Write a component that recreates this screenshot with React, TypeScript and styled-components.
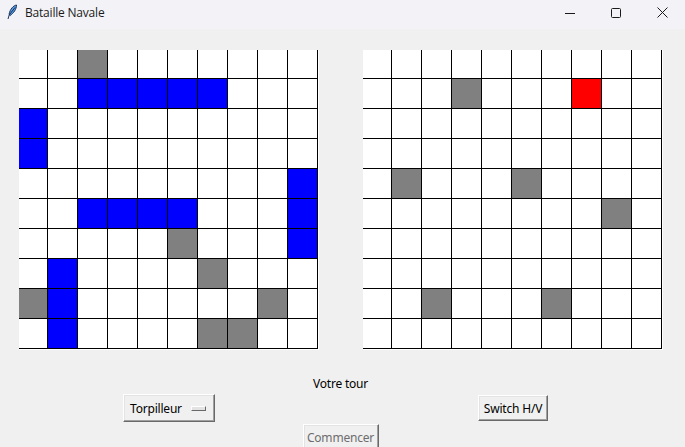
import React from "react";
import styled, { createGlobalStyle } from "styled-components";

type CellState = "empty" | "ship" | "miss" | "hit";

const GlobalStyle = createGlobalStyle`
  html, body {
    margin: 0;
    padding: 0;
    background: #f0f0f0;
  }
  body {
    font-family: "Noto Sans", "DejaVu Sans", sans-serif;
    font-size: 12px;
    color: #000;
  }
`;

const cellColors: Record<CellState, string> = {
  empty: "#ffffff",
  ship: "#0000ff",
  miss: "#808080",
  hit: "#ff0000",
};

// player board: ships placed + enemy shots that missed
const playerShips: [number, number][] = [
  [1, 2], [1, 3], [1, 4], [1, 5], [1, 6],
  [2, 0], [3, 0],
  [4, 9], [5, 9], [6, 9],
  [5, 2], [5, 3], [5, 4], [5, 5],
  [7, 1], [8, 1], [9, 1],
];
const playerMisses: [number, number][] = [
  [0, 2], [6, 5], [7, 6], [8, 0], [8, 8], [9, 6], [9, 7],
];

const enemyMisses: [number, number][] = [
  [1, 3], [4, 1], [4, 5], [5, 8], [8, 2], [8, 6],
];
const enemyHits: [number, number][] = [[1, 7]];

function buildBoard(
  marks: { cells: [number, number][]; state: CellState }[]
): CellState[][] {
  const board: CellState[][] = Array.from({ length: 10 }, () =>
    Array.from({ length: 10 }, () => "empty" as CellState)
  );
  marks.forEach(({ cells, state }) => {
    cells.forEach(([r, c]) => {
      board[r][c] = state;
    });
  });
  return board;
}

const Window = styled.div`
  width: 685px;
  height: 447px;
  overflow: hidden;
  display: flex;
  flex-direction: column;
  background: #f0f0f0;
`;

const TitleBar = styled.div`
  height: 29px;
  flex-shrink: 0;
  display: flex;
  align-items: flex-start;
  background: #f3f3f7;
`;

const TitleIcon = styled.svg`
  width: 16px;
  height: 16px;
  margin: 4px 5px 0 4px;
`;

const TitleText = styled.span`
  font-family: "Open Sans", "Noto Sans", sans-serif;
  font-size: 12px;
  letter-spacing: -0.2px;
  line-height: 26px;
  color: #1a1a1a;
`;

const CaptionButtons = styled.div`
  margin-left: auto;
  display: flex;
`;

const CaptionButton = styled.div`
  width: 46px;
  height: 25px;
  display: flex;
  align-items: center;
  justify-content: center;
`;

const Body = styled.div`
  display: grid;
  grid-template-columns: 338px 350px;
  padding-top: 21px;
`;

const Board = styled.div`
  justify-self: center;
  width: 300px;
  height: 300px;
  background: #ffffff;
  overflow: hidden;
`;

const BoardGrid = styled.div`
  display: grid;
  grid-template-columns: repeat(10, 30px);
  grid-auto-rows: 30px;
  margin: -1px 0 0 -1px;
`;

const Cell = styled.div<{ $state: CellState }>`
  box-sizing: border-box;
  border-right: 1px solid #000;
  border-bottom: 1px solid #000;
  background: ${(p) => cellColors[p.$state]};
`;

const Status = styled.div`
  grid-column: 1 / -1;
  justify-self: center;
  margin: 26px 7px 0 0;
  line-height: 15px;
  letter-spacing: -0.2px;
`;

const TkButton = styled.div<{ $disabled?: boolean }>`
  box-sizing: border-box;
  display: flex;
  align-items: center;
  justify-content: center;
  background: #f0f0f0;
  border: 1px solid;
  border-color: #ffffff #696969 #696969 #ffffff;
  box-shadow: inset -1px -1px 0 #a0a0a0, inset 1px 1px 0 #e3e3e3;
  color: ${(p) => (p.$disabled ? "#6d6d6d" : "#000")};
  letter-spacing: -0.2px;
  white-space: nowrap;
`;

const ShipMenu = styled(TkButton)`
  justify-self: center;
  margin-top: 3px;
  width: 92px;
  height: 28px;
  justify-content: space-between;
  padding: 0 8px 0 6px;
`;

const MenuIndicator = styled.span`
  box-sizing: border-box;
  flex-shrink: 0;
  width: 15px;
  height: 5px;
  background: #e3e3e3;
  border: 1px solid;
  border-color: #ffffff #696969 #696969 #ffffff;
`;

const SwitchButton = styled(TkButton)`
  justify-self: center;
  align-self: center;
  margin-top: 3px;
  width: 70px;
  height: 26px;
`;

const StartButton = styled(TkButton)`
  grid-column: 1 / -1;
  justify-self: center;
  margin: 2px 7px 0 0;
  width: 76px;
  height: 26px;
`;

function GameBoard({ board }: { board: CellState[][] }) {
  return (
    <Board>
      <BoardGrid>
        {board.map((row, r) =>
          row.map((state, c) => <Cell key={`${r}-${c}`} $state={state} />)
        )}
      </BoardGrid>
    </Board>
  );
}

export default function App() {
  const playerBoard = buildBoard([
    { cells: playerShips, state: "ship" },
    { cells: playerMisses, state: "miss" },
  ]);
  const enemyBoard = buildBoard([
    { cells: enemyMisses, state: "miss" },
    { cells: enemyHits, state: "hit" },
  ]);

  return (
    <>
      <GlobalStyle />
      <Window>
        <TitleBar>
          <TitleIcon viewBox="0 0 16 16">
            <path
              d="M12.5 1 C9.5 1.5 6 5 5 10.5 L6.2 11.5 C9.5 9 12.5 5.5 12.5 1 Z"
              fill="#5b9be0"
              stroke="#17345f"
              strokeWidth="1"
            />
            <path d="M11 3.5 L5.2 11 L4 15" stroke="#17345f" strokeWidth="1" fill="none" />
          </TitleIcon>
          <TitleText>Bataille Navale</TitleText>
          <CaptionButtons>
            <CaptionButton>
              <svg width="10" height="10" viewBox="0 0 10 10">
                <path d="M0 5.5 H10" stroke="#1a1a1a" strokeWidth="1" />
              </svg>
            </CaptionButton>
            <CaptionButton>
              <svg width="10" height="10" viewBox="0 0 10 10">
                <rect
                  x="0.5"
                  y="0.5"
                  width="9"
                  height="9"
                  rx="1"
                  fill="none"
                  stroke="#1a1a1a"
                  strokeWidth="1"
                />
              </svg>
            </CaptionButton>
            <CaptionButton>
              <svg width="11" height="11" viewBox="0 0 11 11">
                <path d="M0.5 0.5 L10.5 10.5 M10.5 0.5 L0.5 10.5" stroke="#1a1a1a" strokeWidth="1" />
              </svg>
            </CaptionButton>
          </CaptionButtons>
        </TitleBar>
        <Body>
          <GameBoard board={playerBoard} />
          <GameBoard board={enemyBoard} />
          <Status>Votre tour</Status>
          <ShipMenu>
            Torpilleur
            <MenuIndicator />
          </ShipMenu>
          <SwitchButton>Switch H/V</SwitchButton>
          <StartButton $disabled>Commencer</StartButton>
        </Body>
      </Window>
    </>
  );
}
